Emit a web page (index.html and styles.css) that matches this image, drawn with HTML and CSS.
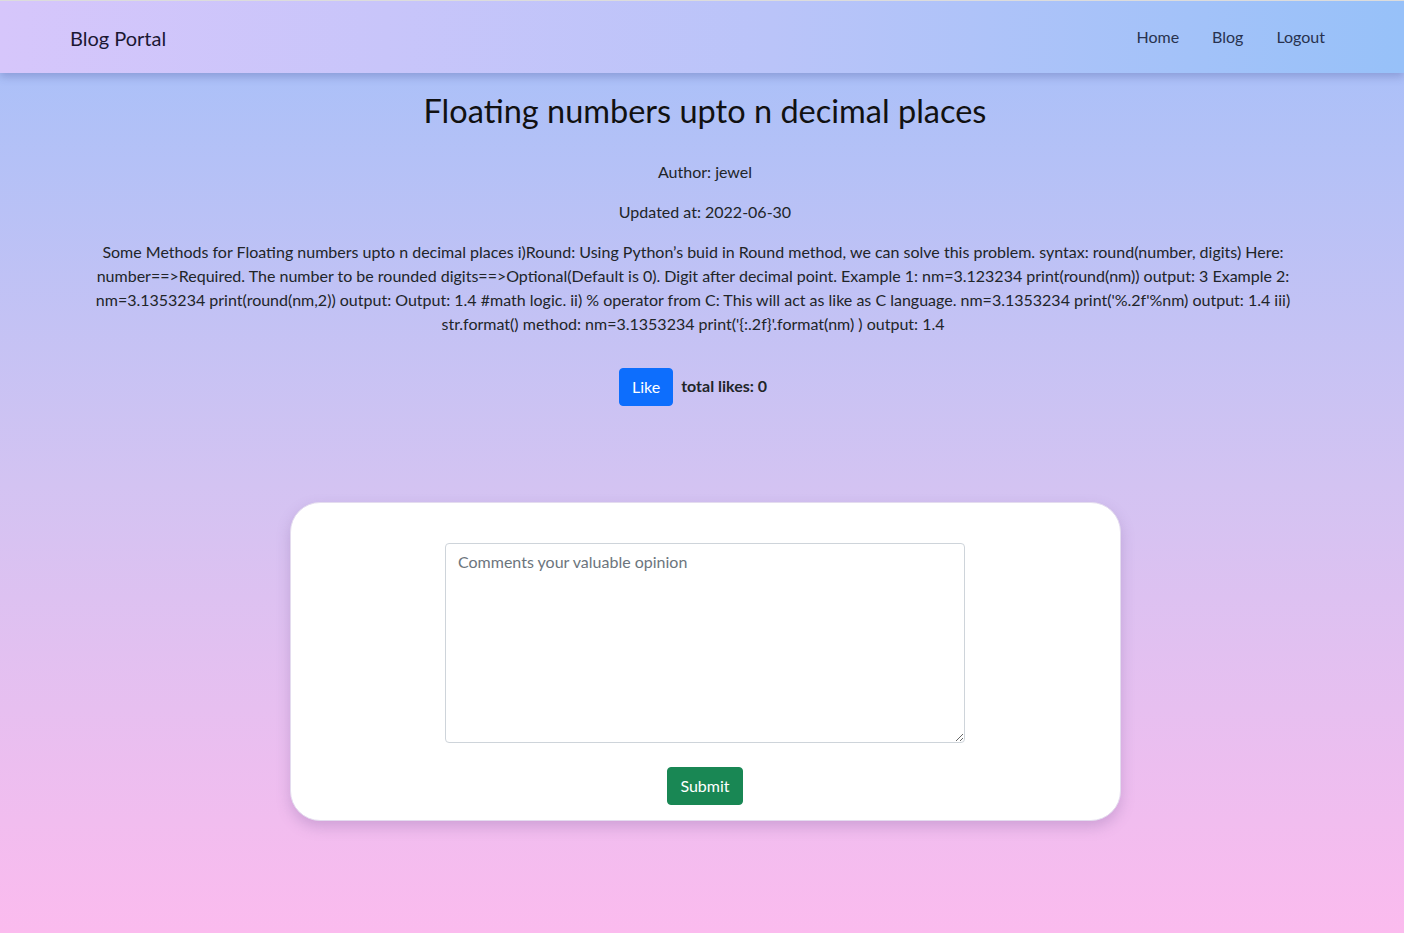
FILE: index.html
```html
<!DOCTYPE html>
<html lang="en">
<head>
<meta charset="utf-8">
<title>Blog Portal</title>
<link rel="stylesheet" href="styles.css">
</head>
<body>
<nav class="navbar">
  <a class="brand" href="#">Blog Portal</a>
  <ul class="nav-links">
    <li><a href="#">Home</a></li>
    <li><a href="#">Blog</a></li>
    <li><a href="#">Logout</a></li>
  </ul>
</nav>
<main class="main">
  <h2 class="title">Floating numbers upto n decimal places</h2>
  <p class="meta">Author: jewel</p>
  <p class="meta">Updated at: 2022-06-30</p>
  <div class="post">
    <p class="body-text">Some Methods for Floating numbers upto n decimal places i)Round: Using Python’s buid in Round method, we can solve this problem. syntax: round(number, digits) Here: number==&gt;Required. The number to be rounded digits==&gt;Optional(Default is 0). Digit after decimal point. Example 1: nm=3.123234 print(round(nm)) output: 3 Example 2: nm=3.1353234 print(round(nm,2)) output: Output: 1.4 #math logic. ii) % operator from C: This will act as like as C language. nm=3.1353234 print('%.2f'%nm) output: 1.4 iii) str.format() method: nm=3.1353234 print('{:.2f}'.format(nm) ) output: 1.4</p>
    <div class="likes">
      <button class="btn btn-like" type="button">Like</button>
      <span class="likes-count">total likes: 0</span>
    </div>
  </div>
  <form class="comment-card">
    <textarea class="comment-input" placeholder="Comments your valuable opinion"></textarea>
    <button class="btn btn-submit" type="button">Submit</button>
  </form>
</main>
</body>
</html>
```

FILE: styles.css
```css
* { box-sizing: border-box; }
html, body { margin: 0; padding: 0; }
body {
  min-height: 933px;
  font-family: Lato, "Liberation Sans", sans-serif;
  font-size: 16px;
  line-height: 1.5;
  color: #212529;
  background: linear-gradient(to bottom, #a5c0f9 0%, #d3c3f2 52%, #fbbbee 100%);
  border-top: 1px solid #dcdcdc;
}
.navbar {
  height: 72px;
  display: flex;
  align-items: center;
  justify-content: space-between;
  padding: 0 79px 0 70px;
  background: linear-gradient(to right, #d6c6fb 0%, #bac4f9 55%, #97c1f9 100%);
  box-shadow: 0 4px 8px rgba(60, 70, 140, 0.28);
  position: relative;
}
.brand {
  font-size: 20px;
  color: #1b1733;
  text-decoration: none;
  line-height: 30px;
  margin-top: 2px;
}
.nav-links {
  display: flex;
  gap: 33px;
  list-style: none;
  margin: 0;
  padding: 0;
}
.nav-links a {
  color: #28324f;
  text-decoration: none;
  font-size: 16px;
}
.main {
  padding: 0 0 0 6px;
  display: flex;
  flex-direction: column;
  align-items: center;
}
.title {
  margin: 18px 0 0;
  font-size: 32.5px;
  font-weight: 400;
  line-height: 1.2;
  color: #111;
}
.meta {
  margin: 30px 0 0;
  text-align: center;
}
.meta + .meta { margin-top: 16px; }
.post {
  align-self: stretch;
  padding-right: 24px;
  display: flex;
  flex-direction: column;
  align-items: center;
}
.body-text {
  width: 1232px;
  margin: 16px 0 0;
  text-align: center;
}
.likes {
  margin-top: 32px;
  display: flex;
  align-items: center;
  gap: 8px;
}
.btn {
  font-family: inherit;
  font-size: 16px;
  line-height: 24px;
  padding: 6px 12px;
  border: 1px solid transparent;
  border-radius: 4px;
  color: #fff;
  cursor: pointer;
}
.btn-like { background: #0d6efd; border-color: #0d6efd; }
.likes-count { font-weight: 700; margin-top: -3px; }
.comment-card {
  margin-top: 96px;
  width: 831px;
  height: 319px;
  background: #fff;
  border: 1px solid #e4dcef;
  border-radius: 30px;
  box-shadow: 0 6px 14px rgba(120, 90, 150, 0.28);
  padding: 40px 0 0;
  display: flex;
  flex-direction: column;
  align-items: center;
}
.comment-input {
  width: 520px;
  height: 200px;
  border: 1px solid #ced4da;
  border-radius: 4px;
  padding: 6px 12px;
  font-family: inherit;
  font-size: 16px;
  line-height: 24px;
  color: #212529;
  resize: vertical;
}
.comment-input::placeholder { color: #6c757d; }
.btn-submit {
  margin-top: 24px;
  background: #198754;
  border-color: #198754;
}
```
